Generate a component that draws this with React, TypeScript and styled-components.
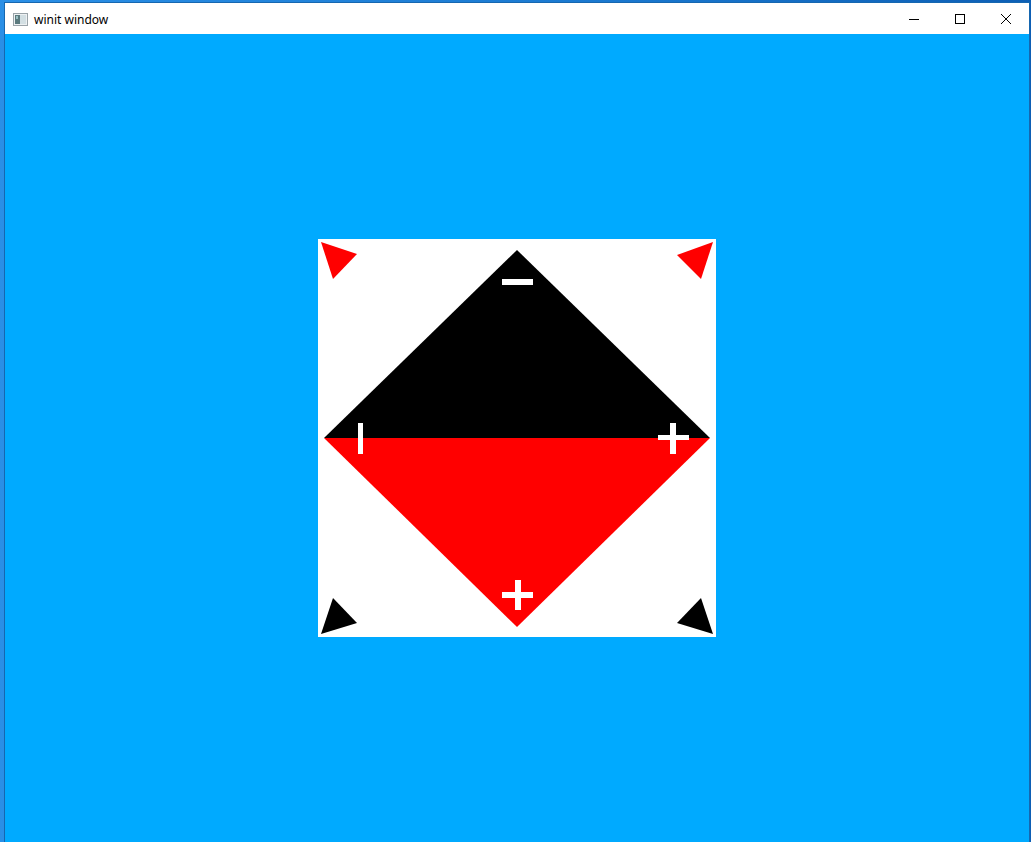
import React from "react";
import styled, { createGlobalStyle } from "styled-components";

const GlobalStyle = createGlobalStyle`
  html, body { margin: 0; padding: 0; height: 100%; }
  body {
    background: linear-gradient(90deg, #2a8fe6 0%, #1a78cf 60%, #0d5fb5 100%);
    overflow: hidden;
  }
  #root { height: 100%; }
`;

const Desktop = styled.div`
  height: 842px;
  width: 1031px;
  box-sizing: border-box;
  padding: 2px 1px 0 4px;
  display: flex;
`;

const Window = styled.div`
  flex: 1;
  display: flex;
  flex-direction: column;
  border: 1px solid #1667b0;
  border-bottom: none;
  background: #00aaff;
`;

const TitleBar = styled.div`
  height: 31px;
  flex: none;
  background: #ffffff;
  display: flex;
  align-items: center;
  font-family: "Noto Sans", "Liberation Sans", sans-serif;
  font-size: 12px;
  color: #000000;
`;

const AppIcon = styled.svg`
  margin-left: 8px;
  margin-top: 1px;
  width: 15px;
  height: 13px;
  flex: none;
`;

const Title = styled.span`
  margin-left: 6px;
  flex: 1;
  line-height: 1;
  padding-top: 2px;
`;

const Controls = styled.div`
  display: flex;
  height: 100%;
`;

const ControlButton = styled.div`
  width: 46px;
  height: 100%;
  display: flex;
  align-items: center;
  justify-content: center;
`;

const Content = styled.div`
  flex: 1;
  display: flex;
  align-items: center;
  justify-content: center;
`;

const Canvas = styled.svg`
  width: 398px;
  height: 398px;
  background: #ffffff;
  display: block;
`;

export default function App() {
  return (
    <>
      <GlobalStyle />
      <Desktop>
        <Window>
          <TitleBar>
            <AppIcon viewBox="0 0 15 13">
              <rect x="0.5" y="0.5" width="14" height="12" fill="#eef1f3" stroke="#9aa3a8" />
              <rect x="2" y="2" width="5" height="9" fill="#5b7a7e" />
              <rect x="7" y="2" width="6" height="9" fill="#d3dfe3" />
              <rect x="3" y="3" width="2" height="3" fill="#9cc0c4" />
            </AppIcon>
            <Title>winit window</Title>
            <Controls>
              <ControlButton>
                <svg width="10" height="10" viewBox="0 0 10 10">
                  <rect x="0" y="5" width="10" height="1" fill="#000" />
                </svg>
              </ControlButton>
              <ControlButton>
                <svg width="10" height="10" viewBox="0 0 10 10">
                  <rect x="0.5" y="0.5" width="9" height="9" fill="none" stroke="#000" strokeWidth="1" />
                </svg>
              </ControlButton>
              <ControlButton>
                <svg width="10" height="10" viewBox="0 0 10 10">
                  <path d="M0 0 L10 10 M10 0 L0 10" stroke="#000" strokeWidth="1" />
                </svg>
              </ControlButton>
            </Controls>
          </TitleBar>
          <Content>
            <Canvas viewBox="0 0 398 398">
              <polygon points="199,11 392,199 6,199" fill="#000000" />
              <polygon points="6,199 392,199 199,388" fill="#ff0000" />
              <polygon points="3,3 39,15 15,40" fill="#ff0000" />
              <polygon points="395,3 359,16 383,40" fill="#ff0000" />
              <polygon points="15,359 39,384 3,395" fill="#000000" />
              <polygon points="383,359 359,384 395,395" fill="#000000" />
              <rect x="184" y="40" width="31" height="6" fill="#ffffff" />
              <rect x="40" y="184" width="5" height="31" fill="#ffffff" />
              <rect x="340" y="196" width="31" height="5" fill="#ffffff" />
              <rect x="352" y="184" width="6" height="31" fill="#ffffff" />
              <rect x="184" y="353" width="31" height="6" fill="#ffffff" />
              <rect x="197" y="341" width="6" height="30" fill="#ffffff" />
            </Canvas>
          </Content>
        </Window>
      </Desktop>
    </>
  );
}
